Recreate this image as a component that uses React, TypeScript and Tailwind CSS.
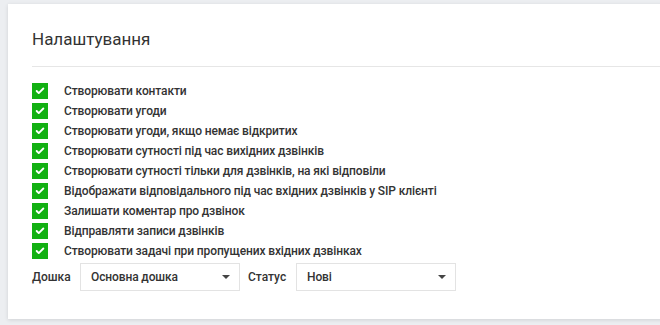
import { Check } from 'lucide-react';

const options = [
  'Створювати контакти',
  'Створювати угоди',
  'Створювати угоди, якщо немає відкритих',
  'Створювати сутності під час вихідних дзвінків',
  'Створювати сутності тільки для дзвінків, на які відповіли',
  'Відображати відповідального під час вхідних дзвінків у SIP клієнті',
  'Залишати коментар про дзвінок',
  'Відправляти записи дзвінків',
  'Створювати задачі при пропущених вхідних дзвінках',
];

function Select({ value }: { value: string }) {
  return (
    <div className="flex h-[28px] w-[160px] items-center justify-between border border-[#e3e3e3] bg-white pl-[10px] pr-[9px] text-[12px] font-medium tracking-[-0.12px] text-[#333]">
      <span>{value}</span>
      <span className="h-0 w-0 border-x-[4px] border-t-[4px] border-x-transparent border-t-[#444]" />
    </div>
  );
}

export default function App() {
  return (
    <div className="h-[325px] w-[660px] overflow-hidden bg-[#eceef1] pl-[8px] pt-[4px] font-['Roboto',sans-serif]">
      <div className="h-[315px] w-[700px] bg-white pl-[24px] shadow-[0_1px_4px_rgba(0,0,0,0.12)]">
        <h2 className="pt-[23px] text-[17px] font-normal leading-[24px] text-[#333]">Налаштування</h2>
        <div className="mt-[15px] border-t border-[#e6e6e6]" />
        <div className="mt-[16px] flex flex-col gap-[4px]">
          {options.map((label) => (
            <label key={label} className="flex h-[16px] items-center gap-[16px]">
              <span className="flex h-[16px] w-[16px] items-center justify-center bg-[#12b012]">
                <Check className="h-[10px] w-[10px] text-white" strokeWidth={4.5} />
              </span>
              <span className="text-[12px] font-medium tracking-[-0.12px] text-[#333]">{label}</span>
            </label>
          ))}
        </div>
        <div className="mt-[4px] flex items-center">
          <span className="w-[48px] text-[12px] font-medium text-[#333]">Дошка</span>
          <Select value="Основна дошка" />
          <span className="w-[56px] pl-[8px] text-[12px] font-medium text-[#333]">Статус</span>
          <Select value="Нові" />
        </div>
      </div>
    </div>
  );
}
